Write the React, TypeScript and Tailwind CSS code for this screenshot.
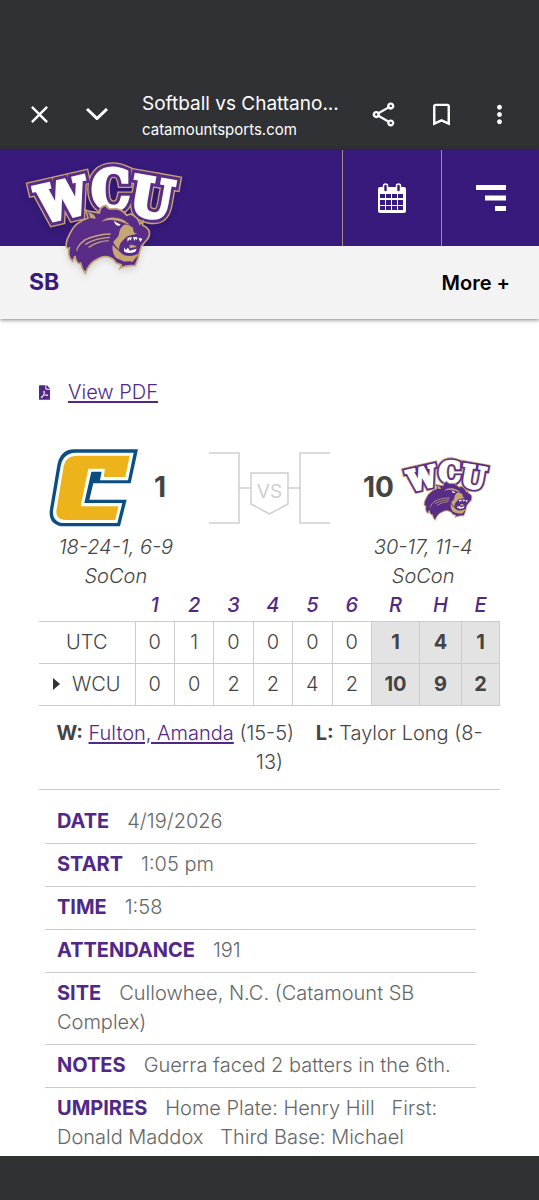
import type { ReactNode } from "react";
import { FaFilePdf } from "react-icons/fa";
import {
  MdBookmarkBorder,
  MdClose,
  MdMoreVert,
  MdOutlineShare,
} from "react-icons/md";

const innings = ["1", "2", "3", "4", "5", "6"];

const lineScore = [
  { team: "UTC", winner: false, runs: ["0", "1", "0", "0", "0", "0"], totals: ["1", "4", "1"] },
  { team: "WCU", winner: true, runs: ["0", "0", "2", "2", "4", "2"], totals: ["10", "9", "2"] },
];

const details = [
  { label: "Date", value: "4/19/2026" },
  { label: "Start", value: "1:05 pm" },
  { label: "Time", value: "1:58" },
  { label: "Attendance", value: "191" },
  { label: "Site", value: "Cullowhee, N.C. (Catamount SB Complex)" },
  { label: "Notes", value: "Guerra faced 2 batters in the 6th." },
  {
    label: "Umpires",
    value: "Home Plate: Henry Hill \u00a0 First: Donald Maddox \u00a0 Third Base: Michael",
  },
];

function Lettering({ className }: { className: string }) {
  return (
    <g
      className={className}
      fontFamily="'DejaVu Serif Condensed', 'DejaVu Serif', serif"
      fontWeight="700"
      fontSize="160"
      textAnchor="middle"
      strokeLinejoin="miter"
      strokeMiterlimit="2"
    >
      <text fontSize="150" transform="translate(127 184) rotate(-13)">W</text>
      <text transform="translate(260 158)">C</text>
      <text transform="translate(374 182) rotate(10)">U</text>
    </g>
  );
}

function WcuLogo({ className }: { className: string }) {
  return (
    <svg viewBox="0 0 492 360" className={className} role="img" aria-label="Western Carolina">
      <Lettering className="fill-[#c6a675] stroke-[#c6a675] stroke-[38px]" />
      <Lettering className="fill-[#592c88] stroke-[#592c88] stroke-[30px]" />
      <Lettering className="fill-white stroke-white stroke-[12px]" />
      {/* Cat head */}
      <path
        d="M184 162C200 168 214 168 226 171C226 158 234 150 246 148C250 158 262 160 272 158C290 158 300 168 308 178L320 174C334 180 344 190 348 204L356 196L356 208C370 214 380 224 375 240C373 252 362 256 358 264C348 272 350 282 345 294C344 310 338 314 334 328C318 328 302 328 288 337L292 326C284 322 276 326 270 312C256 300 240 298 222 308C204 316 192 328 184 352C176 342 172 334 170 322C162 326 154 312 153 300L146 316C134 306 132 292 136 276C122 282 124 258 136 236C146 212 166 194 192 186C190 178 188 170 184 162Z"
        fill="#592c88"
        stroke="#c6a675"
        strokeWidth="5"
      />
      <path d="M190 168C206 172 214 178 215 188L198 186C198 178 195 173 190 168Z" fill="#c6a675" />
      <path d="M232 197C246 182 276 180 300 193L318 206C304 203 292 196 280 194C262 190 246 192 232 197Z" fill="#c6a675" />
      <path d="M298 208C306 202 318 208 328 216C326 226 332 234 340 232C332 238 314 236 304 246C290 258 284 268 286 282C282 276 270 268 268 258C272 250 282 246 284 238C286 226 288 216 298 208Z" fill="#c6a675" />
      <path d="M266 266C274 276 286 284 292 292C302 302 324 302 342 294C342 304 332 306 326 318C314 312 304 320 294 314C290 310 276 310 272 300C266 290 264 276 266 266Z" fill="#c6a675" />
      <path d="M270 194C276 200 284 202 290 206C286 212 272 210 270 194Z" fill="#fff" />
      <path d="M310 246L323 243L321 254L316 249L311 258ZM327 243L340 244L339 252L334 248L331 255ZM343 245L355 248L349 258Z" fill="#fff" />
      <path d="M300 274L305 282L312 275L317 284L338 278L334 287C322 292 306 292 300 286Z" fill="#fff" />
      <path d="M316 268C324 264 334 268 338 273L317 277Z" fill="#c6a675" />
      <path
        d="M178 254C204 240 228 235 260 234M184 265C208 250 232 245 258 244M194 274C214 260 234 255 254 254M158 284C162 270 170 260 182 254"
        fill="none"
        stroke="#c6a675"
        strokeWidth="4"
      />
    </svg>
  );
}

function MocsLogo({ className }: { className: string }) {
  return (
    <svg viewBox="0 0 267 234" className={className} role="img" aria-label="Chattanooga">
      {/* Emblem layers, navy edge first */}
      <path
        d="M75 1H267L245 103H133L121 152H233L213 232H45C15 232 -3 212 3 180L25 48C31 18 48 1 75 1Z"
        fill="#0b4f82"
      />
      <path
        d="M79 11H254L237 94H153L158 68H127L106 162H220L205 222H47C22 222 8 207 13 180L35 50C40 26 56 11 79 11Z"
        fill="#fff"
      />
      <path
        d="M84 20H242L229 84H164L168 59H118L95 172H208L199 213H50C29 213 19 201 23 180L44 52C49 31 62 20 84 20Z"
        fill="#ecb31a"
      />
    </svg>
  );
}

function Bracket() {
  return (
    <svg viewBox="0 0 121 72" className="h-[72px] w-[121px]" fill="none" stroke="#cfcfcf" strokeWidth="1.5">
      <path d="M0 1H30V71H0M121 1H91V71H121M30 36H42M79 36H91" />
      <path d="M42 21H79V52L60.5 62L42 52Z" />
      <text x="60.5" y="46" textAnchor="middle" fontSize="19" fill="#cfcfcf" stroke="none" className="font-normal">
        VS
      </text>
    </svg>
  );
}

function CalendarIcon() {
  return (
    <svg viewBox="0 0 28 30" className="h-[30px] w-7">
      <rect x="0" y="4" width="28" height="26" rx="2" fill="#fff" />
      <path
        d="M2 11h5v4H2zM8 11h5v4H8zM14 11h5v4h-5zM20 11h5v4h-5zM2 17h5v5H2zM8 17h5v5H8zM14 17h5v5h-5zM20 17h5v5h-5zM2 23h5v4H2zM8 23h5v4H8zM14 23h5v4h-5zM20 23h5v4h-5z"
        fill="#371a7b"
      />
      <rect x="5.5" y="1" width="4" height="8" rx="2" fill="#371a7b" stroke="#fff" strokeWidth="1.5" />
      <rect x="18.5" y="1" width="4" height="8" rx="2" fill="#371a7b" stroke="#fff" strokeWidth="1.5" />
    </svg>
  );
}

function ToolbarButton({ label, children }: { label: string; children: ReactNode }) {
  return (
    <button type="button" aria-label={label} className="flex h-14 w-[58px] shrink-0 items-center justify-center">
      {children}
    </button>
  );
}

function BrowserBar() {
  return (
    <div className="flex items-center bg-[#303134] pt-[86px] pr-[11px] pb-2 pl-2.5 text-white">
      <ToolbarButton label="Close">
        <MdClose size={29} />
      </ToolbarButton>
      <ToolbarButton label="Minimize">
        <svg viewBox="0 0 22 12" className="h-3 w-[22px]" fill="none" stroke="currentColor" strokeWidth="3">
          <path d="M1 1L11 10.5L21 1" />
        </svg>
      </ToolbarButton>
      <div className="ml-4 min-w-0 flex-1 pt-1">
        <div className="text-[19px] leading-7 whitespace-nowrap">Softball vs Chattano...</div>
        <div className="text-[15px] leading-6 whitespace-nowrap">catamountsports.com</div>
      </div>
      <ToolbarButton label="Share">
        <MdOutlineShare size={29} />
      </ToolbarButton>
      <ToolbarButton label="Bookmark">
        <MdBookmarkBorder size={29} />
      </ToolbarButton>
      <ToolbarButton label="More options">
        <MdMoreVert size={29} />
      </ToolbarButton>
    </div>
  );
}

function SiteHeader() {
  return (
    <header className="shadow-[0_1px_4px_rgba(0,0,0,0.5)]">
      <div className="relative flex h-24 justify-end bg-[#371a7b]">
        <a href="#home" className="absolute top-1.5 left-6 drop-shadow-md">
          <WcuLogo className="h-[120px] w-[164px]" />
        </a>
        <button
          type="button"
          aria-label="Schedule"
          className="flex w-[99px] items-center justify-center border-l border-[#a38b8f]"
        >
          <CalendarIcon />
        </button>
        <button
          type="button"
          aria-label="Menu"
          className="flex w-[98px] items-center justify-center border-l border-[#a38b8f]"
        >
          <svg viewBox="0 0 30 26" className="h-[26px] w-[30px]" fill="#fff">
            <path d="M0 0h30v5H0zM9 10.500h21v5H9zM19 21h11v5H19z" />
          </svg>
        </button>
      </div>
      <nav className="flex h-[73px] items-center justify-between bg-[#f3f3f3] px-[29px]">
        <a href="#softball" className="text-[23px] font-bold text-[#371a7b]">
          SB
        </a>
        <button type="button" className="text-xl font-semibold text-black">
          More +
        </button>
      </nav>
    </header>
  );
}

function Matchup() {
  return (
    <section className="mt-[41px] grid grid-cols-3">
      <div>
        <div className="flex h-[79px] items-center gap-4 pl-2.5">
          <MocsLogo className="h-[78px] w-[89px]" />
          <span className="text-[28px] font-bold">1</span>
        </div>
        <p className="mt-1.5 text-center italic">
          18-24-1, 6-9
          <br />
          SoCon
        </p>
      </div>
      <div className="flex h-[79px] items-center justify-center">
        <Bracket />
      </div>
      <div>
        <div className="flex h-[79px] items-center justify-end gap-1.5 pr-1.5">
          <span className="text-[28px] font-bold">10</span>
          <WcuLogo className="h-[69px] w-[94px]" />
        </div>
        <p className="mt-1.5 text-center italic">
          30-17, 11-4
          <br />
          SoCon
        </p>
      </div>
    </section>
  );
}

function LineScore() {
  return (
    <table className="w-full table-fixed border-collapse text-center">
      <thead>
        <tr className="h-[30px] text-[#512888] italic">
          <th className="w-24" aria-label="Team" />
          {innings.map((inning) => (
            <th key={inning} className="font-medium">
              {inning}
            </th>
          ))}
          <th className="w-12 font-medium">R</th>
          <th className="w-[42px] font-medium">H</th>
          <th className="w-[38px] font-medium">E</th>
        </tr>
      </thead>
      <tbody>
        {lineScore.map((row) => (
          <tr key={row.team} className="h-[42px] border-y border-[#cccccc]">
            <th className="font-light">
              <span className="flex items-center justify-center gap-3">
                {row.winner && (
                  <svg viewBox="0 0 7 12" className="h-3 w-[7px]" fill="#333">
                    <path d="M0 0L7 6L0 12Z" />
                  </svg>
                )}
                {row.team}
              </span>
            </th>
            {row.runs.map((run, i) => (
              <td key={i} className="border-l border-[#cccccc]">
                {run}
              </td>
            ))}
            {row.totals.map((total, i) => (
              <td key={i} className="border-x border-[#cccccc] bg-[#e3e3e3] font-bold">
                {total}
              </td>
            ))}
          </tr>
        ))}
      </tbody>
    </table>
  );
}

export default function App() {
  return (
    <div className="flex min-h-screen flex-col bg-white font-['Inter',sans-serif]">
      <BrowserBar />
      <SiteHeader />
      <main className="flex-1 px-[39px] pt-[59px] text-xl leading-[29px] font-light text-[#444444]">
        <div className="flex items-center gap-[18px] text-[#512888]">
          <FaFilePdf className="w-[11px] text-[15px]" />
          <a href="#pdf" className="underline underline-offset-2">
            View PDF
          </a>
        </div>

        <Matchup />
        <LineScore />

        <p className="border-b border-[#cccccc] pt-[13px] pb-3 text-center">
          <b className="font-bold">W:</b>{" "}
          <a href="#fulton" className="text-[#512888] underline underline-offset-2">
            Fulton, Amanda
          </a>{" "}
          (15-5) <b className="ml-4 font-bold">L:</b> Taylor Long (8-
          <br />
          13)
        </p>

        <dl className="mt-[11px] mr-6 ml-1.5 text-[#666666]">
          {details.map((item) => (
            <div
              key={item.label}
              className="border-b border-[#cccccc] px-3 pt-1.5 pb-[7px] last:border-b-0 last:pb-0"
            >
              <dt className="mr-[18px] inline font-bold text-[#512888] uppercase">{item.label}</dt>
              <dd className="inline">{item.value}</dd>
            </div>
          ))}
        </dl>
      </main>
      <footer className="h-11 bg-[#303134]" />
    </div>
  );
}
